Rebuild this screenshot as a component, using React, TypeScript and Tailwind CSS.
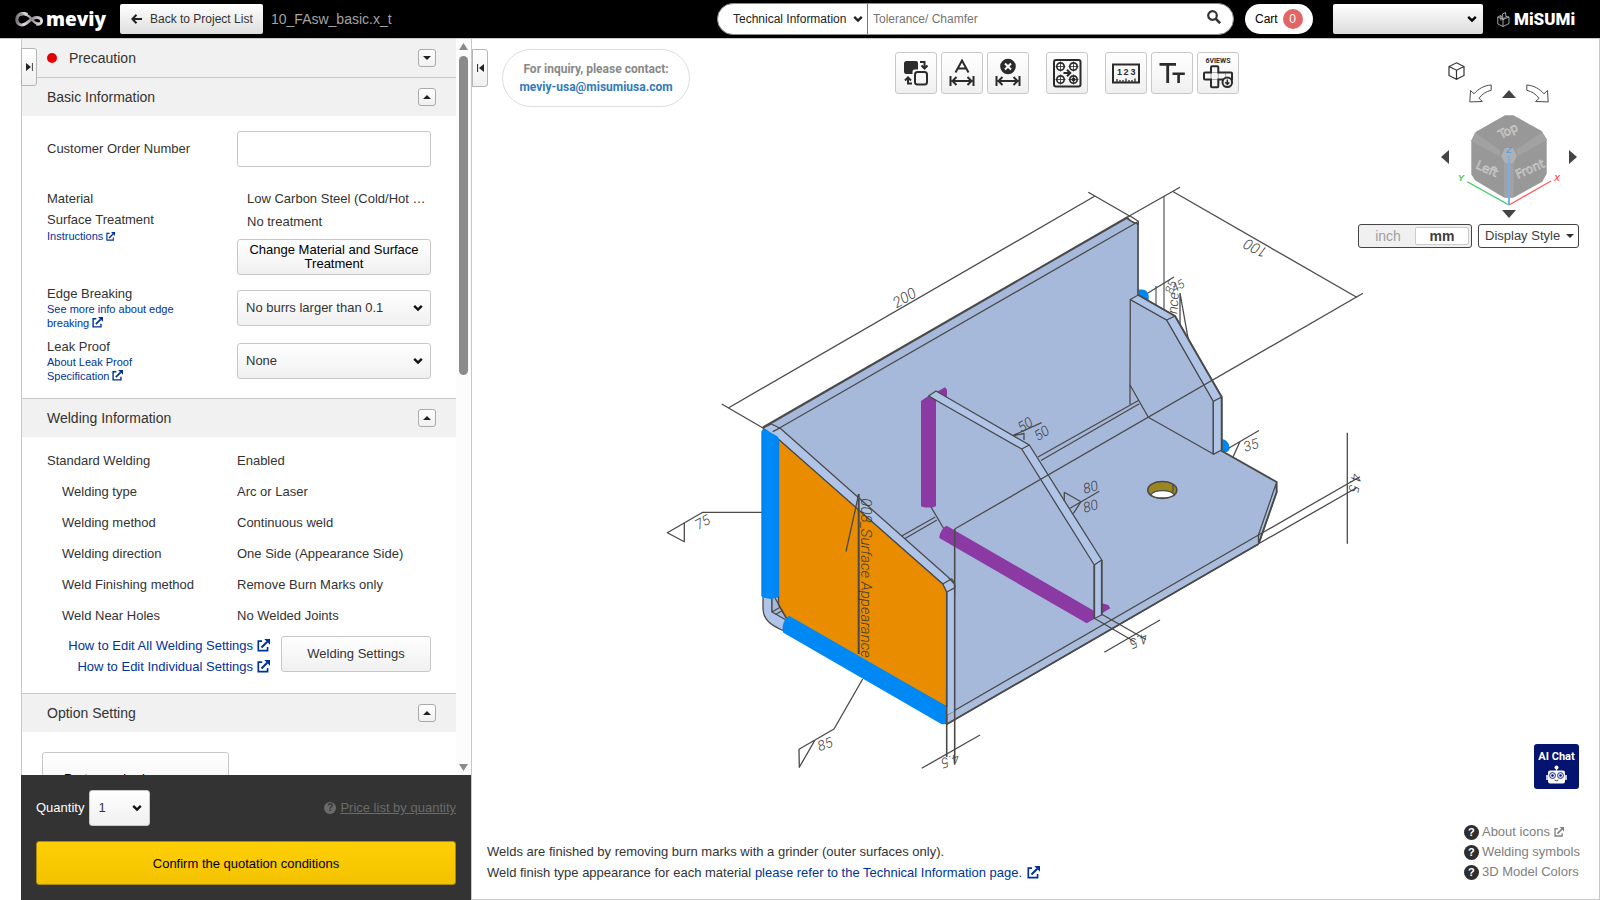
import type { ReactNode } from "react";

const buttonFace = "border border-[#c8c8c8] rounded-[3px] bg-linear-to-b from-white to-[#f0f0f0]";

function ExternalIcon({ className }: { className: string }) {
  return (
    <svg viewBox="0 0 14 14" className={className} fill="none" stroke="currentColor" strokeWidth="1.8" aria-hidden="true">
      <path d="M5.5 2.2H1.4v10.4h10V8.6" />
      <path d="M4.8 9.2 11 3" strokeWidth="2.2" />
      <path d="M7.8 0H14v6.2Z" fill="currentColor" stroke="none" />
    </svg>
  );
}

function Chevron({ className }: { className: string }) {
  return (
    <svg viewBox="0 0 10 8" className={className} fill="none" stroke="currentColor" strokeWidth="2.4" aria-hidden="true">
      <path d="M1.2 1.8 5 5.5 8.8 1.8" />
    </svg>
  );
}

function Dropdown({ label, value, box, text, arrow }: { label: string; value: string; box: string; text: string; arrow: string }) {
  return (
    <div className={`relative ${box}`}>
      <select aria-label={label} className={`h-full w-full appearance-none bg-transparent outline-none ${text}`}>
        <option>{value}</option>
      </select>
      <Chevron className={`pointer-events-none absolute top-1/2 h-2 w-[10px] -translate-y-1/2 ${arrow}`} />
    </div>
  );
}

function SectionHeader({ title, open = true, alert = false, first = false }: { title: string; open?: boolean; alert?: boolean; first?: boolean }) {
  return (
    <div className={`flex items-center justify-between bg-[#f1f1f1] pr-5 pl-[25px] ${first ? "h-[38px]" : "h-[39px] border-t border-[#c8c8c8]"}`}>
      <h2 className="flex items-center text-sm">
        {alert && <span className="mr-3 size-[10px] rounded-full bg-[#e60000]" />}
        {title}
      </h2>
      <button aria-label={`Toggle ${title}`} className="grid size-[18px] place-items-center rounded-[3px] border border-[#aaa] bg-linear-to-b from-white to-[#f0f0f0]">
        <svg viewBox="0 0 8 4" className="h-1 w-2" aria-hidden="true">
          <path d={open ? "M0 4 4 0l4 4Z" : "M0 0h8L4 4Z"} fill="#222" />
        </svg>
      </button>
    </div>
  );
}

const weldRows: [string, string][] = [
  ["Welding type", "Arc or Laser"],
  ["Welding method", "Continuous weld"],
  ["Welding direction", "One Side (Appearance Side)"],
  ["Weld Finishing method", "Remove Burn Marks only"],
  ["Weld Near Holes", "No Welded Joints"],
];

function Header() {
  return (
    <header className="flex h-[38px] shrink-0 items-center bg-black">
      <a href="#home" className="ml-[15px] flex w-[105px] items-center gap-[3px] text-white" aria-label="meviy">
        <svg viewBox="0 0 28 15" className="h-[15px] w-7 shrink-0" fill="none" aria-hidden="true">
          <defs>
            <linearGradient id="mark" x1="0" x2="1">
              <stop offset="0" stopColor="#77747a" />
              <stop offset=".3" stopColor="#e4e0e6" />
              <stop offset=".6" stopColor="#8c888e" />
              <stop offset="1" stopColor="#dedade" />
            </linearGradient>
          </defs>
          <path d="M12.500 2.500C8 0 1.800 2 1.800 7.500S7 14.200 11 11.500C14.500 9 17 5.800 21.500 5.500c3.500-.3 5.500 2 5 4.200-.5 2-3 3.200-5 2.200" stroke="url(#mark)" strokeWidth="3" />
          <path d="M5 3c4-2.500 9 .5 12 4.500 2 2.800 4 4.500 7 4.300" stroke="url(#mark)" strokeWidth="2.200" />
        </svg>
        <span className="pb-px font-['Open_Sans',sans-serif] text-[19px] leading-6 font-extrabold">meviy</span>
      </a>
      <button className="flex h-[30px] w-[143px] shrink-0 items-center rounded-[2px] bg-linear-to-b from-white to-[#dedede] pl-[11px] text-xs text-[#333]">
        <svg viewBox="0 0 11 10" className="mr-2 h-[10px] w-[11px]" fill="none" stroke="#222" strokeWidth="2" aria-hidden="true">
          <path d="M11 5H2M5.500 .8 1.400 5l4.100 4.200" />
        </svg>
        Back to Project List
      </button>
      <span className="ml-2 text-sm whitespace-nowrap text-[#a3a3a3]">10_FAsw_basic.x_t</span>

      <div className="ml-auto flex h-8 w-[517px] overflow-hidden rounded-full border border-[#888] bg-white">
        <Dropdown label="Search category" value="Technical Information" box="w-[150px] border-r border-[#777]" text="pl-[15px] text-xs text-[#222]" arrow="right-[4px] text-[#222]" />
        <input aria-label="Search" placeholder="Tolerance/ Chamfer" className="min-w-0 flex-1 pl-[5px] text-xs outline-none placeholder:text-[#757575]" />
        <button aria-label="Search" className="mr-3 mb-1">
          <svg viewBox="0 0 14 14" className="size-[14px]" fill="none" stroke="#333" aria-hidden="true">
            <circle cx="5.500" cy="5.500" r="4.300" strokeWidth="2.200" />
            <path d="m8.800 8.800 4.400 4.400" strokeWidth="2.600" />
          </svg>
        </button>
      </div>
      <a href="#cart" className="ml-[11px] flex h-[30px] w-[68px] items-center rounded-full bg-white pl-[10px] text-xs text-black">
        Cart
        <span className="ml-[5px] grid size-5 place-items-center rounded-full bg-[#e26464] text-white">0</span>
      </a>
      <Dropdown label="Account" value="" box="ml-5 h-[30px] w-[150px] rounded-[2px] bg-linear-to-b from-white to-[#dcdcdc]" text="px-3 text-xs" arrow="right-[6px] text-black" />
      <a href="#misumi" aria-label="MiSUMi" className="mr-7 ml-[14px] flex w-[75px] items-center gap-1 text-white">
        <svg viewBox="0 0 13 15" className="h-[15px] w-[13px] shrink-0" fill="none" stroke="#ccc" strokeWidth=".8" aria-hidden="true">
          <path d="M.8 5 6 7.500v7L.8 12ZM6 7.500 12 5v6.500L6 14.500M.8 5l3-1.500L6 7.500M6 7.500 5.500 2l3-1.500.5 4M9 4.500l3 .5M3.800 3.500v5M9 4.500 6 7.500" />
        </svg>
        <span className="font-['Roboto',sans-serif] text-[17px] leading-5 font-black">MiSUMi</span>
      </a>
    </header>
  );
}

function Sidebar() {
  return (
    <aside className="relative ml-[21px] flex w-[450px] shrink-0 flex-col text-[#333]">
      <div className="flex min-h-0 flex-1 border-l border-[#c8c8c8]">
        <div className="min-w-0 flex-1 overflow-y-auto [scrollbar-width:none]">
          <section>
            <SectionHeader title="Precaution" open={false} alert first />
          </section>
          <section>
            <SectionHeader title="Basic Information" />
            <div className="px-[25px] pt-[15px] pb-4 text-[13px]">
              <div className="grid grid-cols-[190px_1fr] items-center">
                <label htmlFor="order">Customer Order Number</label>
                <input id="order" className="h-9 w-full rounded-[3px] border border-[#c8c8c8] px-2 outline-none" />
              </div>
              <div className="mt-5 grid grid-cols-[190px_1fr]">
                <div className="pt-px leading-[21px]">
                  <p>Material</p>
                  <p>Surface Treatment</p>
                  <a href="#instructions" className="flex items-center gap-[3px] text-[11px] leading-3 text-[#039]">
                    Instructions <ExternalIcon className="size-[9px]" />
                  </a>
                </div>
                <div>
                  <p className="pl-[10px] leading-[23px]">Low Carbon Steel (Cold/Hot …</p>
                  <p className="pl-[10px] leading-[23px]">No treatment</p>
                  <button className={`mt-[6px] h-9 w-full px-2 leading-[14px] text-black ${buttonFace}`}>Change Material and Surface Treatment</button>
                </div>
              </div>
              <div className="mt-[10px] grid grid-cols-[190px_1fr]">
                <div>
                  <p className="pt-px leading-4">Edge Breaking</p>
                  <a href="#edge" className="block w-[140px] text-[11px] leading-[14px] text-[#039]">
                    See more info about edge breaking <ExternalIcon className="inline-block size-[11px] align-[-1px]" />
                  </a>
                </div>
                <Dropdown label="Edge Breaking" value="No burrs larger than 0.1" box={`mt-[5px] h-9 ${buttonFace}`} text="pl-2 text-[13px]" arrow="right-[7px] text-[#111]" />
              </div>
              <div className="mt-2 grid grid-cols-[190px_1fr]">
                <div>
                  <p className="pt-px leading-4">Leak Proof</p>
                  <a href="#leak" className="block w-[110px] text-[11px] leading-[14px] text-[#039]">
                    About Leak Proof Specification <ExternalIcon className="inline-block size-[11px] align-[-1px]" />
                  </a>
                </div>
                <Dropdown label="Leak Proof" value="None" box={`mt-[5px] h-9 ${buttonFace}`} text="pl-2 text-[13px]" arrow="right-[7px] text-[#111]" />
              </div>
            </div>
          </section>
          <section className="-mt-px">
            <SectionHeader title="Welding Information" />
            <div className="px-[25px] pt-2 pb-4 text-[13px]">
              <dl className="grid grid-cols-[190px_1fr] leading-[31px]">
                <dt>Standard Welding</dt>
                <dd>Enabled</dd>
                {weldRows.map(([name, value]) => (
                  <div key={name} className="contents">
                    <dt className="pl-[15px]">{name}</dt>
                    <dd>{value}</dd>
                  </div>
                ))}
              </dl>
              <div className="mt-1 flex items-start justify-end gap-[11px]">
                <div className="flex flex-col items-end leading-[21px] text-[#039]">
                  <a href="#all" className="flex items-center gap-1">How to Edit All Welding Settings <ExternalIcon className="size-[13px]" /></a>
                  <a href="#individual" className="flex items-center gap-1">How to Edit Individual Settings <ExternalIcon className="size-[13px]" /></a>
                </div>
                <button className={`mt-px h-9 w-[150px] ${buttonFace}`}>Welding Settings</button>
              </div>
            </div>
          </section>
          <section>
            <SectionHeader title="Option Setting" />
            <div className="px-5 pt-5">
              <button className={`h-[54px] w-[187px] pl-[21px] text-left text-[13px] text-black ${buttonFace}`}>Parts numbering</button>
            </div>
          </section>
        </div>
        <div className="flex w-[15px] flex-col items-center justify-between bg-[#fcfcfc] py-1" aria-hidden="true">
          <div className="flex flex-col items-center gap-[6px]">
            <svg viewBox="0 0 9 7" className="h-[7px] w-[9px]"><path d="M0 7 4.500 0 9 7Z" fill="#8b8b8b" /></svg>
            <div className="h-[319px] w-[9px] rounded-full bg-[#8b8b8b]" />
          </div>
          <svg viewBox="0 0 9 7" className="h-[7px] w-[9px]"><path d="M0 0h9L4.500 7Z" fill="#8b8b8b" /></svg>
        </div>
      </div>
      <div className="shrink-0 bg-[#333] px-[15px] pt-[15px] pb-[15px] text-[13px]">
        <div className="flex items-center">
          <span className="mr-[5px] text-white">Quantity</span>
          <Dropdown label="Quantity" value="1" box={`h-9 w-[61px] ${buttonFace}`} text="pl-2 text-[13px] text-[#333]" arrow="right-[7px] text-[#111]" />
          <a href="#prices" className="ml-auto flex items-center gap-1 text-[#6a6a6a]">
            <span className="grid size-3 place-items-center rounded-full bg-[#6a6a6a] text-[10px] leading-3 font-bold text-[#333]">?</span>
            <span className="underline">Price list by quantity</span>
          </a>
        </div>
        <button className="mt-[15px] h-11 w-full rounded-[3px] border border-[#a98b10] bg-linear-to-b from-[#ffcf05] to-[#f2c200] pt-px text-black">Confirm the quotation conditions</button>
      </div>
      <button aria-label="Expand panel" className="absolute top-[9px] left-0 grid h-[38px] w-4 place-items-center rounded-r-[3px] border border-[#b5b5b5] bg-linear-to-b from-white to-[#f0f0f0]">
        <svg viewBox="0 0 7 8" className="h-2 w-[7px]" aria-hidden="true"><path d="M0 0 5 4 0 8Z" fill="#222" /><path d="M6.400 0v8" stroke="#444" /></svg>
      </button>
    </aside>
  );
}

const ink = "#4a4a4a";
const face = "#a7b9da";
const edge = "#b0c4e8";

function Note({ x, y, angle, size = 14, children }: { x: number; y: number; angle: number; size?: number; children: ReactNode }) {
  return (
    <text x={x} y={y} transform={`rotate(${angle} ${x} ${y})`} textAnchor="middle" dominantBaseline="central" fontSize={size} fill="#3c3c3c" stroke="none" className="font-['Roboto',sans-serif] font-light italic">
      {children}
    </text>
  );
}

function Model() {
  return (
    <svg viewBox="472 39 1127 860" className="h-full w-full [grid-area:1/1]" fill="none" stroke={ink} strokeWidth="1.300" strokeLinejoin="round" role="img" aria-label="Welded bracket with dimensions">
      <defs>
        <linearGradient id="tube" x1="0" x2="1"><stop offset="0" stopColor="#0082ec" /><stop offset=".35" stopColor="#008cfa" /><stop offset="1" stopColor="#0084f0" /></linearGradient>
      </defs>
      <path d="M1164 196V320M1156 286V310" stroke="#666" />
      <path d="M1148 293 1174 277M1180 293v40M1180 293l8 45" />
      <Note x={1173} y={303} angle={-86} size={14}>nce</Note>
      <Note x={1171} y={287} angle={-70} size={12}>85</Note>
      <Note x={1178} y={286} angle={-30} size={12}>45</Note>
      <path d="M1138 289.500h4c4 0 6.700 3 6.700 7v6l-10-5Z" fill="#0086f0" stroke="none" />
      <path d="M1221 439c5 0 8.500 4 8.500 9 0 3-2 5-8.500 4Z" fill="#0086f0" stroke="none" />
      <path d="M1229 448 1259 430.500M1233 457l7-15.500" />
      <Note x={1251} y={445} angle={-18}>35</Note>

      <path d="M763 428 1128.500 216.500l10 5.500v73L1175 316l46.700 81v53.500l55 31.500v10l-18.200 52L946.700 724.300 783 630 763 608Z" fill={face} stroke="none" />
      <path d="M1138 222v73" strokeWidth="1.700" />
      <path d="M1127 217.500 1130 216l8.300 5.300v3L1131 221Z" fill="#fff" />
      <path d="M763 427.500 1128 217" strokeWidth="2.100" />
      <path d="M773 431.700 1135 223.500l3-2M1126 218l9 5.500" />
      <path d="M1139.300 400 1038 457M1139.300 403.700 1041 460.500M901.700 536l34.500-19.500M905 538.500l32-18.500" />
      <path d="M946.700 724.300 1258.500 544v-9L946.700 715Z" fill="#abbddd" />
      <path d="M946.700 724.300 1258.500 544" strokeWidth="1.800" />
      <path d="M1258.500 535 1276 484l.7 8-18 51.500Z" fill={edge} />
      <path d="M1221 450.500 1276.700 482v10l-17.700 51" strokeWidth="1.800" />

      <path d="M1130.300 299.500 1166.700 320l46.600 81v53l-65-36.700L1130 385Z" fill={face} />
      <path d="M1130.300 299.500 1138.300 295 1175 316l46.700 81v53l-8.400 4.300V401.300L1166.700 320ZM1166.700 320l8.300-4M1213.300 401.300l8.400-4.300" fill={edge} />
      <path d="M1130 385v19.500" />
      <path d="M1138.300 295 1175 316l46.700 81v53" strokeWidth="1.900" />

      <path d="M1162.300 481.500c8 0 14.500 3.500 14.500 8.500s-6.500 8.500-14.500 8.500-14.500-3.500-14.500-8.500 6.500-8.500 14.500-8.500Z" fill="#9c8622" strokeWidth="1.600" />
      <path d="M1150.800 495c3-5.500 20-6 23.500 0-3 2-7 3-12 3s-9-1-11.500-3Z" fill="#fff" />
      <path d="M1173 484v8" />

      <path d="M936.500 392 945 387.300l2 2.500V399h-10ZM1102 603.300l6.300 1.700 2 3.300-8.300 5Z" fill="#8838a0" stroke="none" />
      <path d="M1011.700 436 1024 433.500v6.500M1011.700 436l30-13.300" />
      <path d="M929 396l92.700 53 72.600 116v53.300l-150-86-15-25Z" fill={face} stroke="none" />
      <path d="M928.500 396 936 391l93.300 54 72.400 115v55l-7.400 3.500V565L1021.700 449ZM1021.700 449l7.600-4M1094.300 565l7.400-5" fill={edge} />
      <path d="M921 401l6.500-4.500L936 400v106c-2 2-13 2-15 0Z" fill="#8c3aa3" stroke="none" />
      <path d="M928.500 396l7.500 4.500" />
      <path d="M931 507l13 22" />
      <path d="M946.700 525.700 1094.300 611v8l-7.600 4.300L939.300 538c0-4 3-11 7.400-12.300Z" fill="#8c3aa3" stroke="none" />
      <path d="M1094.300 565v53.300M1101.700 560v55" strokeWidth="1.700" />
      <path d="M1064.300 492.300 1081 501.700 1073.300 513.500M1064.300 492.300v9M1070 508.300 1099.300 491.300" />
      <Note x={1090.500} y={487} angle={-15}>80</Note>
      <Note x={1090.500} y={506} angle={-15}>80</Note>
      <Note x={1025} y={424.500} angle={-33}>50</Note>
      <Note x={1041.500} y={433} angle={-33}>50</Note>

      <path d="M763 428 771.500 424l9 4.500L948 577l6.500 7v10.500h-8L942.700 584 778 439.300Z" fill={edge} />
      <path d="M772.700 431.700l7.800-4" />
      <path d="M946.700 591 954.700 586v125l-8 4Z" fill={edge} stroke="none" />
      <path d="M942.700 584l9-5.200c2.500 3 3.500 6 3 9l-8 4.200" />
      <path d="M763 596v12c0 12 8 17 20 22.500l8-9-19-10V598Z" fill={edge} />
      <path d="M772 596v16l15 8.500 4-3-14-22Z" fill={face} />
      <path d="M772 612l8.500-5M775.500 614.500l8-4.500" />
      <path d="M778.500 439.300 942.700 584l4 8v115L786 618l-7.500-13Z" fill="#ea8c00" />
      <path d="M775 598l11.500 20" />
      <path d="M761.300 433c0-2.500 1-4 3-4l12.500 7c1.500 1 2.200 2 2.200 4V596c-3 3.500-14.500 3.500-17.700 0Z" fill="url(#tube)" stroke="none" />
      <path d="M789.500 616 946.200 706v18.300h-4.500L783 632.500c-2-7 2-15 6.500-16.500Z" fill="#0089f5" stroke="none" />
      <path d="M946.700 592v165" strokeWidth="1.600" />
      <path d="M954.700 529v234" strokeWidth="1.600" />

      <path d="M954.700 529 1363 293.300" />
      <path d="M721.700 404 763 428M728.300 408 1095 196M1088.300 192.300 1130 216.300M1129.300 216 1180 187.300M1173.300 191.700 1356.700 297.300" />
      <Note x={904.500} y={298} angle={-30} size={15}>200</Note>
      <Note x={1255.500} y={248} angle={208} size={15}>100</Note>
      <path d="M1258.500 535 1360 476.700M1259 543.500 1357 487.500M1347.300 432.700v111" />
      <Note x={1355} y={483} angle={100}>4.5</Note>
      <path d="M1094.300 618.300 1135 642M1101.700 614.300 1146 639.500M1104.300 652.300 1160 620" />
      <Note x={1139} y={641} angle={156}>4.5</Note>
      <path d="M921.700 768.300 980 735" />
      <Note x={950.500} y={761} angle={163}>4.5</Note>
      <path d="M761.700 512.300H702.700L667.300 532.700 684.300 541.700V523" />
      <Note x={702.500} y={522} angle={-28}>75</Note>
      <path d="M862.700 679 834 729 799 749.300l.3 18L815 740" />
      <Note x={825} y={744} angle={-20}>85</Note>
      <path d="M858.700 494v160" strokeWidth="2" />
      <path d="M858.500 495 846 551.500" />
      <Note x={866} y={578} angle={90} size={15}>008_Surface Appearance</Note>
    </svg>
  );
}

function ToolButton({ label, gap = "", children }: { label: string; gap?: string; children: ReactNode }) {
  return (
    <button aria-label={label} className={`size-[42px] ${buttonFace} ${gap}`}>
      <svg viewBox="1 1 40 40" className="size-10" fill="none" stroke="#2b2b2b" strokeWidth="2" aria-hidden="true">{children}</svg>
    </button>
  );
}

const span = <path d="M9.500 24v10M32.500 24v10M11 29h20M15.500 25 11.500 29l4 4M26.500 25l4 4-4 4" />;

function HoleMark({ x, y, solid = false }: { x: number; y: number; solid?: boolean }) {
  return (
    <g strokeWidth="1.700">
      <circle cx={x} cy={y} r="3.700" />
      <path d={`M${x - 5} ${y}h10M${x} ${y - 5}v10`} strokeWidth=".8" />
      {solid && <circle cx={x} cy={y} r="2" fill="#2b2b2b" stroke="none" />}
    </g>
  );
}

function Toolbar() {
  return (
    <div className="mt-[3px] mr-[119px] ml-auto flex gap-1" role="toolbar">
      <ToolButton label="Swap faces">
        <path d="M11.500 9H21q2 0 2 2v6.500h-3.500q-2 0-2 2V22h-6q-2.500 0-2.500-2.500V11.500Q9 9 11.500 9Z" fill="#2b2b2b" stroke="none" />
        <rect x="20" y="20" width="12" height="12.500" rx="2.500" />
        <path d="M25 10h4.500v6M26.500 13.500l3 3 3-3M17 31.500h-4V26M10 28.500l3-3 3 3" />
      </ToolButton>
      <ToolButton label="Auto dimension"><path d="M14.500 20.500 21 8.500l6.500 12M16.800 16.500h8.400" />{span}</ToolButton>
      <ToolButton label="Delete dimension">
        <circle cx="21" cy="14.500" r="7.800" fill="#2b2b2b" stroke="none" />
        <path d="m18 11.500 6 6m0-6-6 6" stroke="#fff" />
        {span}
      </ToolButton>
      <ToolButton label="Hole groups" gap="ml-[13px]">
        <rect x="8" y="8" width="26.500" height="26.500" rx="2" />
        <HoleMark x={14.500} y={14.500} /><HoleMark x={27.500} y={14.500} /><HoleMark x={14.500} y={27.500} /><HoleMark x={27.500} y={27.500} solid />
        <path d="M17.500 21h6.500M21 17.700 24.300 21 21 24.300" />
      </ToolButton>
      <ToolButton label="Measure" gap="ml-[13px]">
        <rect x="8" y="12.500" width="26" height="18" />
        <path d="M12 30v-3M15 30v-2M18 30v-2M21 30v-3.500M24 30v-2M27 30v-2M30 30v-3.500" strokeWidth="1.300" />
        <g fontSize="9" fill="#2b2b2b" stroke="none" textAnchor="middle" className="font-['Liberation_Sans',sans-serif] font-bold">
          <text x="14.500" y="23">1</text>
          <text x="21" y="23">2</text>
          <text x="28" y="23">3</text>
        </g>
      </ToolButton>
      <ToolButton label="Text"><path d="M8.500 12.300H25M16.700 12v19" strokeWidth="2.800" /><path d="M21.500 21.800h12.300M27.600 22v9" strokeWidth="2.600" /></ToolButton>
      <ToolButton label="Six views">
        <path d="M14 20.500h7.300v7H14ZM28.500 20.500v7" stroke="#999" strokeWidth=".8" />
        <path d="M15 14.300h5.300q1 0 1 1v5.200H34q1 0 1 1v6H21.300v6.800q0 1-1 1H15q-1 0-1-1v-6.800H8q-1 0-1-1v-5q0-1 1-1h6v-5.200q0-1 1-1Z" />
        <circle cx="30.300" cy="30.300" r="4.800" fill="#f2f2f2" />
        <path d="M30.300 27.500v4.500M28.300 30.300l2 2.200 2-2.200" strokeWidth="1.500" />
        <text x="21" y="10.800" textAnchor="middle" fontSize="7" fill="#2b2b2b" stroke="none" className="font-['Roboto',sans-serif] font-bold">6VIEWS</text>
      </ToolButton>
    </div>
  );
}

function CurvedArrow({ flip = false }: { flip?: boolean }) {
  return (
    <svg viewBox="0 0 23 19" className="h-[19px] w-[23px]" fill="#fff" stroke="#4a4a4a" aria-hidden="true">
      <path d={flip ? "M.800 1v5.300c5 1 9.500 4.200 12.200 8l-3.400 3.200 12.600.4L21.500 6.500 18 9.800C14 5 7.500 1.300.8 1Z" : "M22.200 1v5.300c-5 1-9.500 4.200-12.200 8l3.400 3.200L.8 17.900 1.500 6.500 5 9.800C9 5 15.500 1.300 22.200 1Z"} />
    </svg>
  );
}

function Arrow({ label, d, size, box }: { label: string; d: string; size: string; box: string }) {
  return (
    <button aria-label={label}>
      <svg viewBox={box} className={size} aria-hidden="true"><path d={d} fill="#444" /></svg>
    </button>
  );
}

function ViewControls() {
  return (
    <div className="mt-[13px] mr-5 flex w-[221px] flex-col">
      <div className="mr-[2px] flex w-[136px] flex-col items-center self-end">
        <button aria-label="Isometric view" className="ml-[7px] self-start">
          <svg viewBox="0 0 17 18" className="h-[18px] w-[17px]" fill="none" stroke="#333" strokeWidth="1.200" aria-hidden="true">
            <path d="M8.500.8 16 4.500v9L8.500 17.300 1 13.500v-9ZM1 4.500l7.500 3.700L16 4.500M8.500 8.200v9" />
          </svg>
        </button>
        <div className="mt-1 flex items-center gap-[10px]">
          <button aria-label="Rotate left"><CurvedArrow /></button>
          <Arrow label="Tilt up" box="0 0 14 8" size="h-2 w-[14px]" d="M0 8 7 0l7 8Z" />
          <button aria-label="Rotate right"><CurvedArrow flip /></button>
        </div>
        <div className="mt-1 flex w-full items-center justify-between">
          <Arrow label="Turn left" box="0 0 8 14" size="h-[14px] w-2" d="M8 0v14L0 7Z" />
          <svg viewBox="1455 106 108 99" className="h-[99px] w-[108px]" role="img" aria-label="View cube">
            <path d="M1505 114.300h8.300L1541.700 130l5 8.300v34.400l-4.400 8-29 16h-9L1475 179.300l-3.700-6v-34l4.700-8.600Z" fill="#989898" />
            <path d="M1475 131.500 1501 150l-2 5-27.500-15ZM1542 131l-26 18 2 6 28.500-16ZM1504 163h9.500v33.500h-9.500Z" fill="#a2a2a2" />
            <path d="M1505 147h8l4 8-4 7.500h-8l-4-7.500Z" fill="#b0b0b0" />
            <g fill="#a4a4a4" stroke="#cfcfcf" strokeWidth=".6" fontSize="12" textAnchor="middle" className="font-['DejaVu_Sans',sans-serif]">
              <text x="1508" y="134" transform="rotate(-26 1508 130)">Top</text>
              <text x="1487" y="172" transform="rotate(24 1487 168)">Left</text>
              <text x="1530" y="172" transform="rotate(-24 1530 168)">Front</text>
            </g>
            <path d="M1467.300 180.700 1509 204" stroke="#3ec95c" strokeWidth="1.300" />
            <path d="M1509 204 1551 180" stroke="#ff5a5a" strokeWidth="1.300" />
            <path d="M1509 204v-49" stroke="#74b0f0" strokeWidth="2" />
            <g fontSize="9" textAnchor="middle" className="font-['Liberation_Sans',sans-serif] font-bold italic">
              <text x="1461" y="180" fill="#3ec95c">Y</text>
              <text x="1557" y="180" fill="#ff5a5a">X</text>
              <text x="1509" y="152" fill="#5b9fe8">Z</text>
            </g>
          </svg>
          <Arrow label="Turn right" box="0 0 8 14" size="h-[14px] w-2" d="M0 0v14l8-7Z" />
        </div>
        <div className="mt-1 flex"><Arrow label="Tilt down" box="0 0 14 8" size="h-2 w-[14px]" d="M0 0h14L7 8Z" /></div>
      </div>
      <div className="mt-[6px] flex gap-[6px] text-[#3d3d3d]">
        <div className="flex h-6 w-[114px] rounded-[3px] border border-[#444] bg-[#f0f0f0] p-[2px] text-sm leading-4">
          <button className="flex-1 text-[#a0a0a0]">inch</button>
          <button className="w-[54px] rounded-[2px] border border-[#ccc] bg-white font-bold">mm</button>
        </div>
        <button className="flex h-6 w-[101px] items-center justify-between rounded-[3px] border border-[#444] bg-white pr-1 pl-[6px] text-[13px] whitespace-nowrap">
          Display Style
          <svg viewBox="0 0 8 4" className="h-1 w-2" aria-hidden="true"><path d="M0 0h8L4 4Z" fill="#333" /></svg>
        </button>
      </div>
    </div>
  );
}

function HelpLink({ external = false, children }: { external?: boolean; children: string }) {
  return (
    <a href="#help" className="flex h-5 items-center whitespace-nowrap">
      <span className="mr-[3px] grid size-[15px] shrink-0 place-items-center rounded-full bg-[#2e2e2e] text-[11px] leading-3 font-bold text-white">?</span>
      {children}
      {external && <ExternalIcon className="ml-1 size-[10px]" />}
    </a>
  );
}

function Viewer() {
  return (
    <main className="grid min-w-0 flex-1 grid-cols-1 grid-rows-1 border-r border-b border-l border-[#c8c8c8] bg-white">
      <Model />
      <div className="z-10 flex flex-col justify-between [grid-area:1/1]">
        <div className="flex items-start pt-[10px]">
          <button aria-label="Collapse panel" className="grid h-[38px] w-4 place-items-center rounded-r-[3px] border border-[#b5b5b5] bg-linear-to-b from-white to-[#f0f0f0]">
            <svg viewBox="0 0 7 8" className="h-2 w-[7px]" aria-hidden="true"><path d="M7 0 2 4l5 4Z" fill="#222" /><path d="M.6 0v8" stroke="#222" /></svg>
          </button>
          <div className="ml-[14px] flex h-[58px] w-[188px] shrink-0 flex-col items-center justify-center rounded-full border border-[#ddd] bg-white font-['Roboto',sans-serif] text-xs leading-[18px] font-bold whitespace-nowrap">
            <span className="text-[#888]">For inquiry, please contact:</span>
            <a href="mailto:meviy-usa@misumiusa.com" className="text-[#337ab7]">meviy-usa@misumiusa.com</a>
          </div>
          <Toolbar />
          <ViewControls />
        </div>
        <div className="flex items-end justify-between pr-[19px] pb-4 pl-[15px] text-[13px]">
          <p className="leading-[21px] text-[#333]">
            Welds are finished by removing burn marks with a grinder (outer surfaces only).
            <br />
            Weld finish type appearance for each material{" "}
            <a href="#technical" className="text-[#039]">
              please refer to the Technical Information page. <ExternalIcon className="ml-px inline-block size-[13px] align-[-2px]" />
            </a>
          </p>
          <div className="flex flex-col pb-px">
            <button className="mr-px mb-[33px] flex size-[45px] flex-col items-center self-end rounded-[3px] bg-[#04136f] pt-1 text-white">
              <span className="font-['Roboto',sans-serif] text-[11px] leading-[17px] font-bold whitespace-nowrap">AI Chat</span>
              <svg viewBox="0 0 21 19" className="h-[19px] w-[21px]" aria-hidden="true">
                <circle cx="10.500" cy="2.500" r="2" fill="#fff" />
                <path d="M10 4h1v2h-1Z" fill="#fff" />
                <rect x="2" y="5.500" width="17" height="13" rx="2" fill="#fff" />
                <path d="M0 10h2v5H0ZM19 10h2v5h-2Z" fill="#bcc3e4" />
                <circle cx="6.500" cy="10.500" r="3" fill="#dfe4f7" stroke="#04136f" strokeWidth=".8" />
                <circle cx="14.500" cy="10.500" r="3" fill="#dfe4f7" stroke="#04136f" strokeWidth=".8" />
                <circle cx="6.500" cy="10.500" r="1.200" fill="#04136f" />
                <circle cx="14.500" cy="10.500" r="1.200" fill="#04136f" />
                <path d="M8.500 15q2 1.500 4 0" fill="none" stroke="#04136f" strokeWidth=".8" />
              </svg>
            </button>
            <nav className="text-[#808080]">
              <HelpLink external>About icons</HelpLink>
              <HelpLink>Welding symbols</HelpLink>
              <HelpLink>3D Model Colors</HelpLink>
            </nav>
          </div>
        </div>
      </div>
    </main>
  );
}

export default function App() {
  return (
    <div className="flex h-screen flex-col bg-white font-['Liberation_Sans',Arial,sans-serif]">
      <Header />
      <div className="flex min-h-0 flex-1 border-t border-[#c8c8c8]">
        <Sidebar />
        <Viewer />
      </div>
    </div>
  );
}
